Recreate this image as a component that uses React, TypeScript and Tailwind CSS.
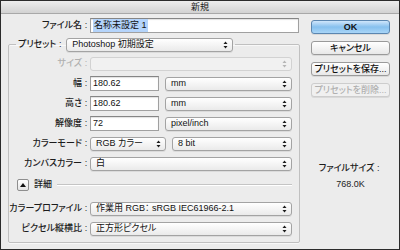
import type { ReactNode } from 'react';

const font = "[font-family:'Liberation_Sans','Noto_Sans_CJK_JP',sans-serif] [font-feature-settings:'palt']";

function Arrows({ disabled }: { disabled?: boolean }) {
    const c = disabled ? '#b5b5b5' : '#1a1a1a';
    return (
        <svg width="5" height="8" viewBox="0 0 5 8" className="shrink-0">
            <polygon points="0.5,3 2.5,0.5 4.5,3" fill={c} />
            <polygon points="0.5,5 2.5,7.5 4.5,5" fill={c} />
        </svg>
    );
}

function Popup({ children, className = '', disabled }: { children?: ReactNode; className?: string; disabled?: boolean }) {
    return (
        <div className={`flex items-center justify-between h-[14px] rounded-[3px] border pl-[5px] pr-[4px] text-[9px] leading-none ${disabled ? 'border-[#d2d2d2] bg-[#f1f1f1] text-[#aaa]' : 'border-[#a3a3a3] bg-linear-to-b from-white to-[#eaeaea] text-[#111] shadow-[0_1px_0_rgba(0,0,0,0.07)]'} ${className}`}>
            <span className="whitespace-nowrap">{children}</span>
            <Arrows disabled={disabled} />
        </div>
    );
}

function Field({ children, className = '' }: { children?: ReactNode; className?: string }) {
    return (
        <div className={`flex items-center h-[15px] border border-[#a0a0a0] border-t-[#858585] bg-white pl-[2px] text-[9px] leading-none text-[#111] shadow-[inset_0_1px_1px_rgba(0,0,0,0.12)] ${className}`}>
            {children}
        </div>
    );
}

function Colon() {
    return <span className="inline-block w-[8px] text-center">:</span>;
}

function Row({ label, children, disabled }: { label: string; children: ReactNode; disabled?: boolean }) {
    return (
        <div className="flex items-center h-[15px]">
            <div className={`w-[81px] text-right text-[9px] leading-none whitespace-nowrap font-medium ${disabled ? 'text-[#b0b0b0]' : 'text-[#1c1c1c]'}`}>{label}<Colon /></div>
            <div className="flex flex-1 items-center gap-[6px] pr-[7px]">{children}</div>
        </div>
    );
}

function Btn({ children, primary, disabled }: { children: ReactNode; primary?: boolean; disabled?: boolean }) {
    const look = primary
        ? 'border-[#5b86b0] bg-linear-to-b from-[#cfe6fb] via-[#86c0ee] to-[#a9d5f7] font-bold text-[#111]'
        : disabled
            ? 'border-[#cdcdcd] bg-[#f0f0f0] text-[#b0b0b0] font-medium'
            : 'border-[#9a9a9a] bg-linear-to-b from-white to-[#e8e8e8] text-[#111] font-medium';
    return (
        <div className={`flex items-center justify-center w-[79px] h-[14px] rounded-[3px] border text-[9px] leading-none shadow-[0_1px_0_rgba(0,0,0,0.08)] ${look}`}>
            {children}
        </div>
    );
}

export default function App() {
    return (
        <main className={`w-[400px] h-[250px] border border-[#2b2b2b] bg-[#ececec] flex flex-col overflow-hidden ${font}`}>
            <div className="h-[13px] shrink-0 border-b border-[#a8a8a8] bg-linear-to-b from-[#ededed] to-[#d2d2d2] flex items-center justify-center text-[9px] leading-none text-[#222]">
                新規
            </div>
            <div className="flex flex-1">
                <div className="w-[299px] pl-[7px] pt-[4px] flex flex-col">
                    <div className="flex items-center h-[15px]">
                        <div className="w-[82px] text-right text-[9px] leading-none text-[#1c1c1c] whitespace-nowrap font-medium">ファイル名<Colon /></div>
                        <Field className="flex-1 mr-[1px]">
                            <span className="bg-[#b4d4fb] px-[1px] py-[2px]">名称未設定 1</span>
                        </Field>
                    </div>
                    <fieldset className="mt-[4px] h-[206px] border border-[#c0c0c0] shadow-[inset_0_1px_0_#f8f8f8,0_1px_0_#f8f8f8] rounded-[2px] flex flex-col">
                        <legend className="ml-[7px] px-[2px] flex items-center h-[15px]">
                            <span className="text-[9px] leading-none text-[#1c1c1c] whitespace-nowrap font-medium">プリセット<Colon /></span>
                            <Popup className="w-[167px] ml-[2px]">Photoshop 初期設定</Popup>
                        </legend>
                        <div className="flex flex-col gap-[5px] pt-[4px]">
                            <Row label="サイズ" disabled>
                                <Popup disabled className="flex-1"></Popup>
                            </Row>
                            <Row label="幅">
                                <Field className="w-[69px]">180.62</Field>
                                <Popup className="flex-1">mm</Popup>
                            </Row>
                            <Row label="高さ">
                                <Field className="w-[69px]">180.62</Field>
                                <Popup className="flex-1">mm</Popup>
                            </Row>
                            <Row label="解像度">
                                <Field className="w-[69px]">72</Field>
                                <Popup className="flex-1">pixel/inch</Popup>
                            </Row>
                            <Row label="カラーモード">
                                <Popup className="w-[76px]">RGB カラー</Popup>
                                <Popup className="flex-1">8 bit</Popup>
                            </Row>
                            <Row label="カンバスカラー">
                                <Popup className="flex-1">白</Popup>
                            </Row>
                        </div>
                        <div className="flex items-center h-[15px] mt-[6px] pl-[8px] pr-[7px]">
                            <div className="w-[12px] h-[12px] rounded-[2px] border border-[#8e8e8e] bg-linear-to-b from-white to-[#e4e4e4] flex items-center justify-center">
                                <svg width="6" height="4" viewBox="0 0 6 4"><polygon points="0,4 3,0 6,4" fill="#111" /></svg>
                            </div>
                            <span className="ml-[5px] text-[9px] leading-none text-[#1c1c1c] font-medium">詳細</span>
                            <div className="ml-[5px] flex-1 h-[2px] border-t border-[#c4c4c4] border-b-white border-b"></div>
                        </div>
                        <div className="flex flex-col gap-[5px] mt-[9px]">
                            <Row label="カラープロファイル">
                                <Popup className="flex-1">作業用 RGB： sRGB IEC61966-2.1</Popup>
                            </Row>
                            <Row label="ピクセル縦横比">
                                <Popup className="flex-1">正方形ピクセル</Popup>
                            </Row>
                        </div>
                    </fieldset>
                </div>
                <div className="flex-1 pl-[11px] pt-[6px] flex flex-col">
                    <div className="flex flex-col gap-[7px]">
                        <Btn primary>OK</Btn>
                        <Btn>キャンセル</Btn>
                        <Btn>プリセットを保存...</Btn>
                        <Btn disabled>プリセットを削除...</Btn>
                    </div>
                    <div className="w-[79px] mt-[67px] flex flex-col items-center text-[9px] leading-none text-[#1c1c1c] font-medium">
                        <span>ファイルサイズ<Colon /></span>
                        <span className="mt-[7px]">768.0K</span>
                    </div>
                </div>
            </div>
        </main>
    );
}
